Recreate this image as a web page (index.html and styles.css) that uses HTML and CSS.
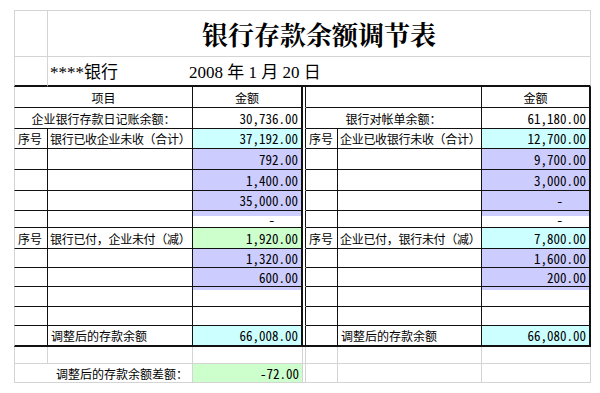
FILE: index.html
```html
<!DOCTYPE html>
<html>
<head>
    <meta charset="utf-8"/>
    <title>银行存款余额调节表</title>
    <link rel="stylesheet" href="styles.css">
</head>
<body>
<table class="sheet">
    <colgroup>
        <col class="w-no"><col class="w-item"><col class="w-amt"><col class="w-gap">
        <col class="w-no2"><col class="w-item2"><col class="w-amt2">
    </colgroup>
    <tr class="r-title">
        <td></td>
        <td colspan="6" class="title">银行存款余额调节表</td>
    </tr>
    <tr class="r-bank">
        <td></td>
        <td colspan="6" class="bank"><span class="bank-name">****银行</span><span>2008 年 1 月 20 日</span></td>
    </tr>
    <tr class="box r21">
        <td colspan="2" class="l mid">项目</td>
        <td class="c mid">金额</td>
        <td class="gap"></td>
        <td colspan="2" class="l"></td>
        <td class="g mid">金额</td>
    </tr>
    <tr class="box r21">
        <td colspan="2" class="l mid">企业银行存款日记账余额：</td>
        <td class="c num">30,736.00</td>
        <td class="gap"></td>
        <td colspan="2" class="l mid">银行对帐单余额：</td>
        <td class="g num">61,180.00</td>
    </tr>
    <tr class="box r20">
        <td class="l">序号</td>
        <td class="l item">银行已收企业未收（合计）</td>
        <td class="c num cyan">37,192.00</td>
        <td class="gap"></td>
        <td class="l">序号</td>
        <td class="l item">企业已收银行未收（合计）</td>
        <td class="g num cyan">12,700.00</td>
    </tr>
    <tr class="box r21">
        <td class="l"></td>
        <td class="l"></td>
        <td class="c num violet">792.00</td>
        <td class="gap"></td>
        <td class="l"></td>
        <td class="l"></td>
        <td class="g num violet">9,700.00</td>
    </tr>
    <tr class="box r21">
        <td class="l"></td>
        <td class="l"></td>
        <td class="c num violet">1,400.00</td>
        <td class="gap"></td>
        <td class="l"></td>
        <td class="l"></td>
        <td class="g num violet">3,000.00</td>
    </tr>
    <tr class="box r20">
        <td class="l"></td>
        <td class="l"></td>
        <td class="c num violet">35,000.00</td>
        <td class="gap"></td>
        <td class="l"></td>
        <td class="l"></td>
        <td class="g num dash violet">-</td>
    </tr>
    <tr class="box r17">
        <td class="l"></td>
        <td class="l"></td>
        <td class="c num dash spill">-</td>
        <td class="gap"></td>
        <td class="l"></td>
        <td class="l"></td>
        <td class="g num dash spill">-</td>
    </tr>
    <tr class="box r21">
        <td class="l">序号</td>
        <td class="l item">银行已付，企业未付（减）</td>
        <td class="c num green">1,920.00</td>
        <td class="gap"></td>
        <td class="l">序号</td>
        <td class="l item">企业已付，银行未付（减）</td>
        <td class="g num cyan">7,800.00</td>
    </tr>
    <tr class="box r19">
        <td class="l"></td>
        <td class="l"></td>
        <td class="c num violet">1,320.00</td>
        <td class="gap"></td>
        <td class="l"></td>
        <td class="l"></td>
        <td class="g num violet">1,600.00</td>
    </tr>
    <tr class="box r19">
        <td class="l"></td>
        <td class="l"></td>
        <td class="c num violet">600.00</td>
        <td class="gap"></td>
        <td class="l"></td>
        <td class="l"></td>
        <td class="g num violet">200.00</td>
    </tr>
    <tr class="box r20">
        <td class="l"></td>
        <td class="l"></td>
        <td class="c spill-sm"></td>
        <td class="gap"></td>
        <td class="l"></td>
        <td class="l"></td>
        <td class="g spill-sm"></td>
    </tr>
    <tr class="box r19">
        <td class="l"></td>
        <td class="l"></td>
        <td class="c"></td>
        <td class="gap"></td>
        <td class="l"></td>
        <td class="l"></td>
        <td class="g"></td>
    </tr>
    <tr class="box r-end">
        <td class="l"></td>
        <td class="l">调整后的存款余额</td>
        <td class="c num cyan">66,008.00</td>
        <td class="gap"></td>
        <td class="l"></td>
        <td class="l">调整后的存款余额</td>
        <td class="g num cyan">66,080.00</td>
    </tr>
    <tr class="r17">
        <td></td><td></td><td></td><td></td><td></td><td></td><td></td>
    </tr>
    <tr class="r19">
        <td colspan="2" class="diff-label">调整后的存款余额差额：</td>
        <td class="num green">-72.00</td>
        <td></td><td></td><td></td><td></td>
    </tr>
</table>
</body>
</html>
```

FILE: styles.css
```css
body {
    margin: 0;
    background: #fff;
    color: #000;
    font: 12px "Noto Sans CJK SC", sans-serif;
}

.sheet {
    border-collapse: separate;
    border-spacing: 0;
    table-layout: fixed;
    width: 577px;
    margin: 10px 0 0 14px;
}

.w-no { width: 34px; }
.w-item { width: 145px; }
.w-amt { width: 110px; }
.w-gap { width: 3px; }
.w-no2 { width: 32px; }
.w-item2 { width: 144px; }
.w-amt2 { width: 109px; }

.sheet td {
    box-sizing: border-box;
    padding: 0 3px;
    border-right: 1px solid #d4d4d4;
    border-bottom: 1px solid #d4d4d4;
    white-space: nowrap;
    overflow: hidden;
    line-height: 15px;
    vertical-align: middle;
}

.sheet td:first-child {
    border-left: 1px solid #d4d4d4;
}

.r-title td {
    border-top: 1px solid #d4d4d4;
}

.r-title { height: 47px; }
.r-bank { height: 30px; }
.r21 { height: 21px; }
.r20 { height: 20px; }
.r19 { height: 19px; }
.r17 { height: 17px; }
.r-end { height: 21px; }

.title {
    text-align: center;
    font: bold 26px "Noto Serif CJK SC", "Noto Sans CJK SC", serif;
    line-height: 30px;
}

.r-bank td {
    border-bottom: 2px solid #111;
    padding-top: 3px;
    font: 17px "Liberation Serif", "Noto Sans CJK SC", serif;
    line-height: 20px;
}

.bank-name {
    display: inline-block;
    width: 139px;
    margin-left: -1px;
}

/* the framed reconciliation block */
.box td {
    border-bottom-color: #111;
}

.box .l {
    border-right-color: #111;
}

.box .c,
.box .g {
    border-right: 2px solid #111;
}

.box .gap {
    padding: 0;
    border-bottom-color: #fff;
    border-right-color: #111;
}

.r-end td {
    border-bottom: 2px solid #111;
}

.box.r-end .gap {
    border-bottom: 2px solid #111;
}

.sheet .item {
    padding: 0 0 0 2px;
    letter-spacing: -0.3px;
}

.mid {
    text-align: center;
}

.num {
    text-align: right;
    padding-right: 8px;
    font: 13px "Noto Sans Mono CJK SC", "Liberation Mono", monospace;
}

.sheet .dash {
    padding-right: 26px;
}

.cyan { background: #ccffff; }
.violet { background: #ccccff; }
.green { background: #ccffcc; }

.spill {
    background: linear-gradient(#ccccff 0 5px, #fff 5px);
}

.spill-sm {
    background: linear-gradient(#ccccff 0 3px, #fff 3px);
}

.sheet .diff-label {
    padding-left: 41px;
}
```
